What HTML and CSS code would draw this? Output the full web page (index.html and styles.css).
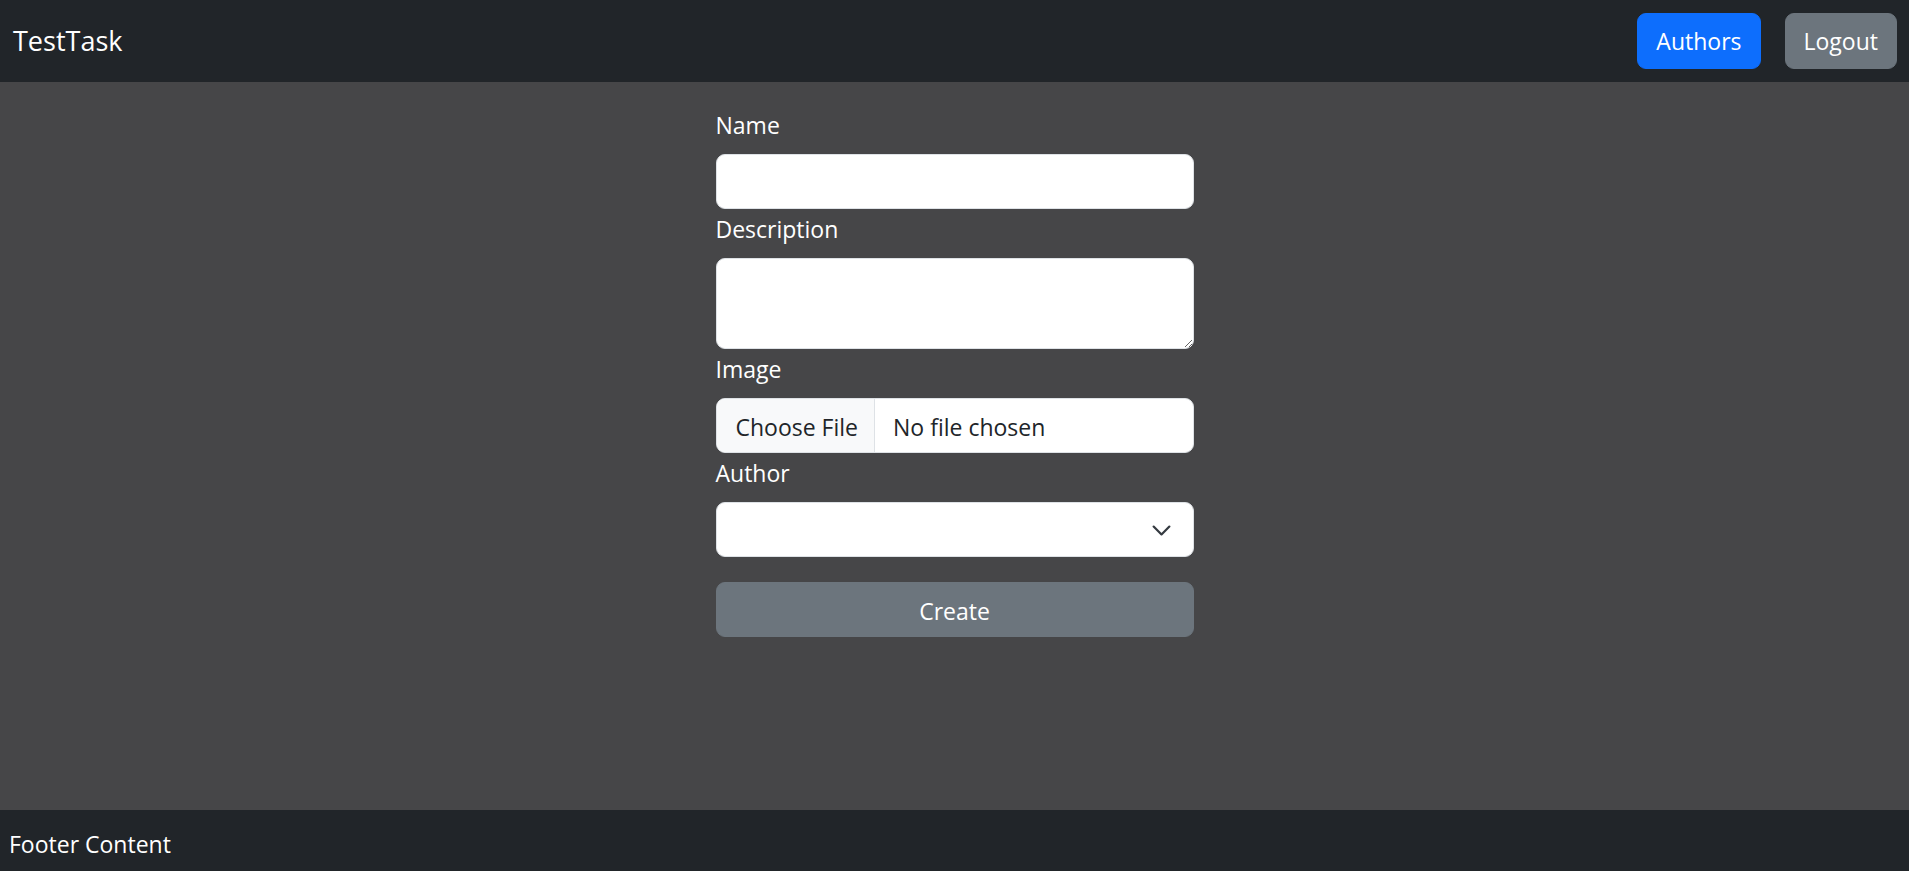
FILE: index.html
```html
<!DOCTYPE html>
<html lang="en">
<head>
<meta charset="utf-8">
<title>TestTask</title>
<link rel="stylesheet" href="styles.css">
</head>
<body>
<header class="navbar">
  <a class="brand" href="#">TestTask</a>
  <nav class="nav-actions">
    <a class="btn btn-primary" href="#">Authors</a>
    <a class="btn btn-secondary" href="#">Logout</a>
  </nav>
</header>
<main class="content">
  <form class="book-form">
    <div class="field">
      <label class="form-label" for="name">Name</label>
      <input class="form-control" id="name" type="text">
    </div>
    <div class="field">
      <label class="form-label" for="description">Description</label>
      <textarea class="form-control form-textarea" id="description"></textarea>
    </div>
    <div class="field">
      <label class="form-label" for="image">Image</label>
      <label class="form-control file-control" for="image">
        <span class="file-button">Choose File</span>
        <span class="file-name">No file chosen</span>
      </label>
      <input class="file-hidden" id="image" type="file">
    </div>
    <div class="field">
      <label class="form-label" for="author">Author</label>
      <div class="select-wrap">
        <select class="form-control form-select" id="author"><option></option></select>
        <svg class="select-chevron" viewBox="0 0 16 16" width="21" height="21" aria-hidden="true">
          <path d="m2 5 6 6 6-6" fill="none" stroke="#343a40" stroke-width="1.7" stroke-linecap="round" stroke-linejoin="round"/>
        </svg>
      </div>
    </div>
    <button class="btn btn-secondary btn-block" type="submit">Create</button>
  </form>
</main>
<footer class="footer">Footer Content</footer>
</body>
</html>
```

FILE: styles.css
```css
* {
  box-sizing: border-box;
}

html, body {
  margin: 0;
  padding: 0;
}

body {
  min-height: 100vh;
  display: flex;
  flex-direction: column;
  background: #464648;
  color: #ffffff;
  font-family: "Open Sans", "Noto Sans", sans-serif;
  font-size: 23px;
  line-height: 1.5;
}

.navbar {
  height: 82px;
  flex: none;
  display: flex;
  align-items: center;
  justify-content: space-between;
  background: #212529;
  padding: 0 12px 0 13px;
}

.brand {
  color: #ffffff;
  text-decoration: none;
  font-size: 27px;
  line-height: 1.5;
}

.nav-actions {
  display: flex;
  gap: 24px;
}

.btn {
  display: inline-flex;
  align-items: center;
  justify-content: center;
  height: 56px;
  padding: 0 18px;
  border: 1px solid transparent;
  border-radius: 9px;
  color: #ffffff;
  text-decoration: none;
  font-family: inherit;
  font-size: 23px;
  line-height: 1.5;
  white-space: nowrap;
  cursor: pointer;
}

.btn-primary {
  background: #0d6efd;
  border-color: #0d6efd;
}

.btn-secondary {
  background: #6c757d;
  border-color: #6c757d;
}

.content {
  flex: 1;
  display: flex;
  justify-content: center;
  padding-top: 23px;
}

.book-form {
  width: 478px;
  display: flex;
  flex-direction: column;
}

.field {
  display: flex;
  flex-direction: column;
}

.form-label {
  display: block;
  line-height: 35px;
  padding-top: 3px;
  margin-bottom: 11px;
}

.form-control {
  display: block;
  width: 100%;
  height: 55px;
  margin: 0;
  padding: 0 17px;
  border: 1px solid #dee2e6;
  border-radius: 9px;
  background: #ffffff;
  color: #212529;
  font-family: inherit;
  font-size: 23px;
  line-height: 1.5;
}

.form-textarea {
  height: 91px;
  padding-top: 8px;
  resize: vertical;
}

.file-control {
  display: flex;
  align-items: stretch;
  padding: 0;
  overflow: hidden;
  cursor: pointer;
}

.file-button {
  flex: none;
  display: flex;
  align-items: center;
  padding: 3px 16px 0 19px;
  white-space: nowrap;
  background: #f8f9fa;
  border-right: 1px solid #dee2e6;
}

.file-name {
  display: flex;
  align-items: center;
  padding: 3px 0 0 18px;
  white-space: nowrap;
}

.file-hidden {
  display: none;
}

.select-wrap {
  position: relative;
}

.form-select {
  appearance: none;
  -webkit-appearance: none;
  padding-right: 52px;
}

.select-chevron {
  position: absolute;
  right: 22px;
  top: 18px;
  pointer-events: none;
}

.btn-block {
  width: 100%;
  height: 55px;
  margin-top: 25px;
  padding-top: 3px;
}

.footer {
  flex: none;
  height: 61px;
  background: #212529;
  padding: 17px 9px 0;
  line-height: 34.5px;
}
```
